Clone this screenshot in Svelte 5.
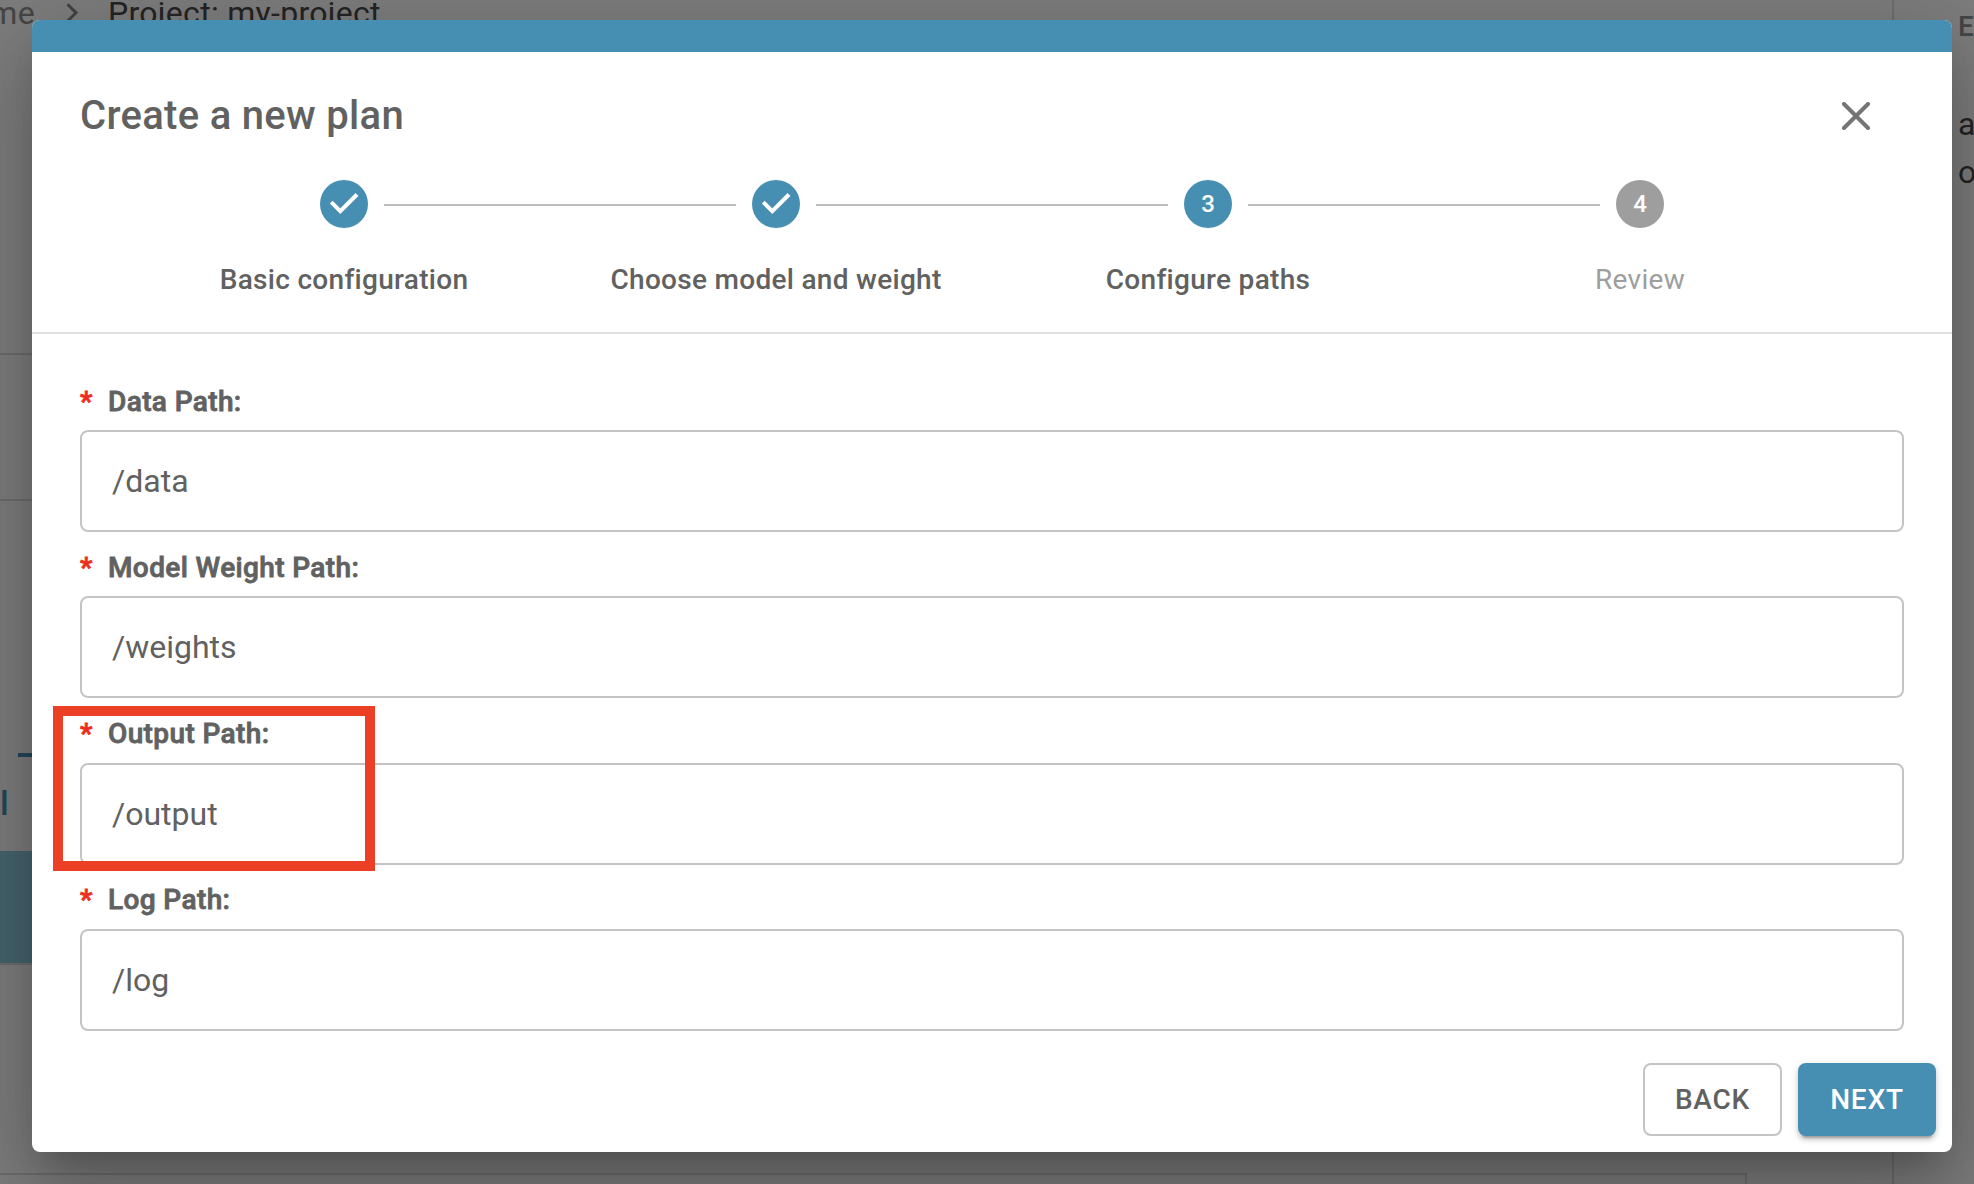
<script>
  const steps = [
    { label: 'Basic configuration', state: 'done' },
    { label: 'Choose model and weight', state: 'done' },
    { label: 'Configure paths', state: 'active' },
    { label: 'Review', state: 'pending' }
  ];
  const fields = $state([
    { label: 'Data Path:', value: '/data' },
    { label: 'Model Weight Path:', value: '/weights' },
    { label: 'Output Path:', value: '/output', marked: true },
    { label: 'Log Path:', value: '/log' }
  ]);
</script>

<div class="screen">
  <div class="page">
    <div class="main">
      <div class="crumbs">
        <span class="home">me</span>
        <svg class="chevron" viewBox="0 0 12 20"><path d="M1.5 1.2 10 9.7 1.5 18.2" /></svg>
        <span>Project: my-project</span>
      </div>
      <div class="row first"></div>
      <div class="row second"></div>
      <div class="tabs">
        <div class="indicator"></div>
        <div class="tab">l</div>
      </div>
      <div class="selected"></div>
      <div class="rest"></div>
      <div class="foot"></div>
    </div>
    <div class="side">
      <div class="side-title">E</div>
      <div>a</div>
      <div>o</div>
    </div>
  </div>

  <div class="backdrop">
    <div class="dialog">
      <div class="band"></div>
      <header>
        <h2>Create a new plan</h2>
        <button class="close" aria-label="Close">
          <svg viewBox="0 0 28 28"><path d="M2 2 26 26M26 2 2 26" /></svg>
        </button>
      </header>
      <div class="stepper">
        {#each steps as step, i}
          <div class="step {step.state}">
            <div class="track">
              <div class="line" class:blank={i === 0}></div>
              <div class="dot">
                {#if step.state === 'done'}
                  <svg viewBox="0 0 48 48"><path d="M11.2 22.2 20.3 31.2 37 14.5" /></svg>
                {:else}
                  {i + 1}
                {/if}
              </div>
              <div class="line" class:blank={i === steps.length - 1}></div>
            </div>
            <div class="step-label">{step.label}</div>
          </div>
        {/each}
      </div>
      <div class="form">
        {#each fields as field}
          <label class="field">
            <span class="caption"><span class="star">*</span>{field.label}</span>
            <input bind:value={field.value} />
            {#if field.marked}<span class="marker"></span>{/if}
          </label>
        {/each}
      </div>
      <footer>
        <button class="btn outline">BACK</button>
        <button class="btn solid">NEXT</button>
      </footer>
    </div>
  </div>
</div>

<style>
  :global(body) { margin: 0; overflow: hidden; }
  * { box-sizing: border-box; }
  .screen {
    position: relative; width: 1974px; height: 1184px; overflow: hidden;
    font-family: Roboto, 'Liberation Sans', sans-serif; color: #616161;
  }
  .page { display: flex; height: 100%; background: #fafafa; color: #484848; font-size: 32px; letter-spacing: 0.3px; }
  .main { flex: none; width: 1892px; display: flex; flex-direction: column; }
  .crumbs { display: flex; align-items: flex-start; height: 364px; flex: none; margin-top: -11px; line-height: 48px; white-space: nowrap; }
  .home { width: 35px; display: flex; justify-content: flex-end; color: #8c8c8c; margin-right: 31px; }
  .chevron { width: 12px; height: 20px; margin: 14px 30px 0 0; fill: none; stroke: #858585; stroke-width: 3; }
  .row { flex: none; border-top: 2px solid #dadada; }
  .first { height: 146px; }
  .second { height: 254px; }
  .tabs { height: 98px; flex: none; }
  .indicator { width: 50px; height: 4px; margin-left: 18px; background: #468eb2; }
  .tab { font-weight: 500; font-size: 34px; line-height: 40px; margin-top: 26px; color: #468eb2; }
  .selected { height: 114px; flex: none; background: #8dc9dd; border-bottom: 2px solid #dadada; }
  .rest { height: 208px; flex: none; }
  .foot { width: 1747px; height: 11px; border-top: 2px solid #dadada; border-right: 2px solid #dadada; }
  .side { flex: none; width: 100px; border-left: 2px solid #dcdcdc; padding: 3px 0 0 64px; line-height: 48px; }
  .side-title { font-size: 28px; font-weight: 500; color: #8c8c8c; margin-bottom: 49px; }
  .backdrop {
    position: absolute; inset: 0; padding: 20px 22px 32px 32px;
    background: rgba(0, 0, 0, 0.5);
  }
  .dialog {
    height: 1132px; background: #fff; border-radius: 8px; overflow: hidden;
    box-shadow: 0 22px 30px -14px rgba(0,0,0,.2), 0 48px 76px 6px rgba(0,0,0,.14), 0 18px 92px 16px rgba(0,0,0,.12);
  }
  .band { height: 32px; background: #468eb2; }
  header { display: flex; justify-content: space-between; padding: 32px 80px 0 48px; height: 128px; }
  h2 { margin: 0; font-size: 40px; font-weight: 500; line-height: 64px; letter-spacing: 0.3px; }
  .close { border: 0; padding: 0; background: none; width: 32px; height: 64px; display: grid; place-items: center; }
  .close svg { width: 28px; height: 28px; fill: none; stroke: #757575; stroke-width: 4; stroke-linecap: round; }
  .stepper { display: flex; height: 154px; padding: 0 96px; border-bottom: 2px solid #e0e0e0; }
  .step { flex: 1; display: flex; flex-direction: column; align-items: center; gap: 32px; }
  .track { display: flex; align-items: center; width: 100%; gap: 16px; }
  .line { flex: 1; height: 2px; margin-top: 2px; background: #bdbdbd; }
  .blank { visibility: hidden; }
  .dot {
    width: 48px; height: 48px; border-radius: 50%; background: #468eb2; color: #fff;
    display: grid; place-items: center; font-size: 24px; font-weight: 500; line-height: 48px;
  }
  .dot svg { width: 48px; height: 48px; fill: none; stroke: #fff; stroke-width: 4; }
  .pending .dot { background: #9e9e9e; }
  .step-label { font-size: 28px; font-weight: 500; line-height: 40px; letter-spacing: 0.3px; white-space: nowrap; }
  .pending .step-label { font-weight: 400; color: #9e9e9e; }
  .form { padding: 47px 48px 0; display: flex; flex-direction: column; height: 729px; }
  .field { position: relative; display: block; height: 166.3px; }
  .caption {
    display: flex; align-items: center; height: 40px; margin-bottom: 9px; font-size: 28px; font-weight: 500;
    letter-spacing: 0.38px; -webkit-text-stroke: 0.8px currentColor;
  }
  .star { width: 28px; color: #f02c1c; }
  input {
    display: block; width: 100%; height: 102px; padding: 0 30px; border: 2px solid #c4c4c4; border-radius: 8px;
    background: #fff; font: 400 32px Roboto, sans-serif; letter-spacing: 0; color: #616161; outline: 0;
  }
  .marker { position: absolute; left: -27px; top: -8px; width: 322px; height: 165px; border: 10px solid #eb4026; }
  footer { display: flex; justify-content: flex-end; gap: 16px; padding-right: 16px; }
  .btn {
    height: 73px; padding: 0; width: 139px; border-radius: 8px; font: 500 28px Roboto, sans-serif;
    letter-spacing: 0.8px;
  }
  .outline { background: #fff; border: 2px solid #c4c4c4; color: #616161; }
  .solid {
    width: 138px; background: #468eb2; border: 0; color: #fff;
    box-shadow: 0 6px 2px -4px rgba(0,0,0,.2), 0 4px 4px rgba(0,0,0,.14), 0 2px 10px rgba(0,0,0,.12);
  }
</style>
